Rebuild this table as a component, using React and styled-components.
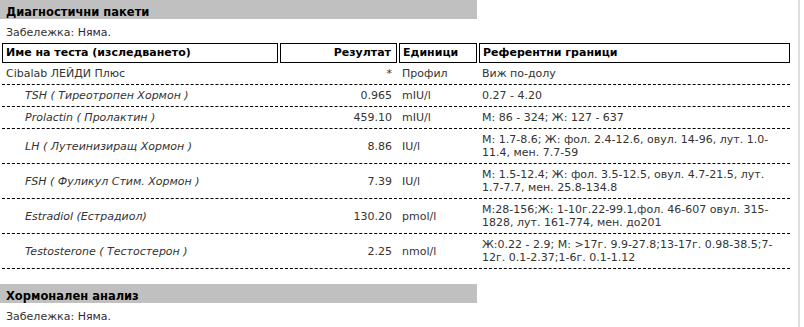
import React from 'react';
import styled, { createGlobalStyle } from 'styled-components';

const GlobalStyle = createGlobalStyle`
  html, body {
    margin: 0;
    padding: 0;
    background: #fff;
  }
  body {
    font-family: "DejaVu Sans", Verdana, sans-serif;
    font-size: 11px;
    color: #333;
  }
`;

const packages = [
  {
    name: 'Cibalab ЛЕЙДИ Плюс',
    result: '*',
    unit: 'Профил',
    range: 'Виж по-долу',
  },
  { name: 'TSH ( Тиреотропен Хормон )', result: '0.965', unit: 'mIU/l', range: '0.27 - 4.20', sub: true },
  { name: 'Prolactin ( Пролактин )', result: '459.10', unit: 'mIU/l', range: 'М: 86 - 324; Ж: 127 - 637', sub: true },
  {
    name: 'LH ( Лутеинизиращ Хормон )',
    result: '8.86',
    unit: 'IU/l',
    range: 'М: 1.7-8.6; Ж: фол. 2.4-12.6, овул. 14-96, лут. 1.0-11.4, мен. 7.7-59',
    sub: true,
  },
  {
    name: 'FSH ( Фуликул Стим. Хормон )',
    result: '7.39',
    unit: 'IU/l',
    range: 'М: 1.5-12.4; Ж: фол. 3.5-12.5, овул. 4.7-21.5, лут. 1.7-7.7, мен. 25.8-134.8',
    sub: true,
  },
  {
    name: 'Estradiol (Естрадиол)',
    result: '130.20',
    unit: 'pmol/l',
    range: 'М:28-156;Ж: 1-10г.22-99.1,фол. 46-607 овул. 315-1828, лут. 161-774, мен. до201',
    sub: true,
  },
  {
    name: 'Testosterone ( Тестостерон )',
    result: '2.25',
    unit: 'nmol/l',
    range: 'Ж:0.22 - 2.9; М: >17г. 9.9-27.8;13-17г. 0.98-38.5;7-12г. 0.1-2.37;1-6г. 0.1-1.12',
    sub: true,
  },
];

export default function App() {
  return (
    <>
      <GlobalStyle />
      <Page>
        <SectionTitle>Диагностични пакети</SectionTitle>
        <Note>
          Забележка: <NoteValue>Няма.</NoteValue>
        </Note>
        <Results>
          <colgroup>
            <col style={{ width: 276 }} />
            <col style={{ width: 117 }} />
            <col style={{ width: 78 }} />
            <col style={{ width: 311 }} />
          </colgroup>
          <thead>
            <tr>
              <HeadCell>Име на теста (изследването)</HeadCell>
              <HeadCell $right>Резултат</HeadCell>
              <HeadCell>Единици</HeadCell>
              <HeadCell>Референтни граници</HeadCell>
            </tr>
          </thead>
          <tbody>
            {packages.map((row) => (
              <tr key={row.name}>
                <NameCell $sub={row.sub}>{row.name}</NameCell>
                <Cell $right>{row.result}</Cell>
                <Cell>{row.unit}</Cell>
                <Cell>{row.range}</Cell>
              </tr>
            ))}
          </tbody>
        </Results>

        <SectionTitle $spaced>Хормонален анализ</SectionTitle>
        <Note>
          Забележка: <NoteValue>Няма.</NoteValue>
        </Note>
      </Page>
    </>
  );
}

// Styled Components
const Page = styled.div`
  width: 800px;
  min-height: 327px;
  box-sizing: border-box;
  border-right: 2px solid #dedede;
`;

const SectionTitle = styled.div`
  width: 477px;
  height: 19px;
  box-sizing: border-box;
  padding: 5px 0 0 6px;
  margin-top: ${(p) => (p.$spaced ? '15px' : '0')};
  background-color: #c0c0c0;
  color: #000;
  font-size: 11.5px;
  font-weight: bold;
  line-height: 14px;
`;

const Note = styled.div`
  margin-top: 7px;
  padding-left: 6px;
  line-height: 14px;
  color: #333;
`;

const NoteValue = styled.span`
  color: #3a1e3a;
`;

const Results = styled.table`
  margin-top: 3px;
  width: 792px;
  table-layout: fixed;
  border-collapse: separate;
  border-spacing: 2px 0;
`;

const HeadCell = styled.th`
  border: 1px solid #000;
  padding: 2px 5px 2px 3px;
  line-height: 14px;
  font-weight: bold;
  color: #000;
  text-align: ${(p) => (p.$right ? 'right' : 'left')};
  white-space: nowrap;
`;

const Cell = styled.td`
  border-bottom: 1px dashed #000;
  padding: 4px 5px 4px 3px;
  line-height: 13px;
  vertical-align: middle;
  text-align: ${(p) => (p.$right ? 'right' : 'left')};
  color: #333;
`;

const NameCell = styled(Cell)`
  padding-left: ${(p) => (p.$sub ? '23px' : '4px')};
  font-style: ${(p) => (p.$sub ? 'italic' : 'normal')};
`;
